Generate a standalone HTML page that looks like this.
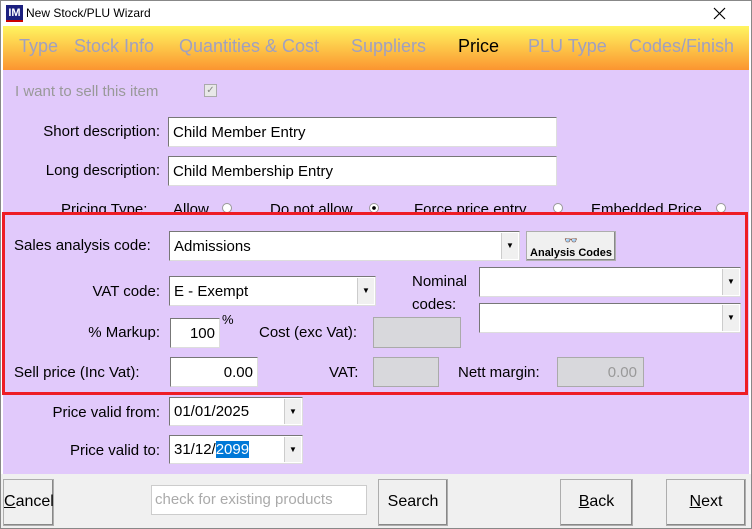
<!DOCTYPE html>
<html><head><meta charset="utf-8"><style>
*{box-sizing:border-box;margin:0;padding:0}
body{width:752px;height:529px;overflow:hidden;background:#fff;font-family:"Comic Sans MS","Liberation Sans",sans-serif;font-size:15px;color:#000;position:relative}
.a{position:absolute;white-space:nowrap}
.win{position:absolute;left:0;top:0;width:752px;height:529px;border:1px solid #888}
.title{left:1px;top:1px;width:750px;height:25px;background:#fff;font-size:12px}
.band{left:3px;top:26px;width:746px;height:44px;background:linear-gradient(#fff560,#fb9530)}
.band span{position:absolute;top:10px;font-size:18px;color:#a0a0c0}
.lav{left:3px;top:70px;width:746px;height:404px;background:#e1c9fb}
.bot{left:1px;top:474px;width:750px;height:54px;background:#f0f0f0}
.in{position:absolute;background:#fff;border:1px solid #777;border-right-color:#ddd;border-bottom-color:#ddd;padding:5px 4px 0;font-size:15px;line-height:20px}
.gr{position:absolute;background:#d8d8dc;border:1px solid #aaa;text-align:right;padding:5px 6px 0;color:#999;line-height:20px}
.dd{position:absolute;right:1px;top:1px;bottom:1px;width:17px;background:#f0f0f0;border-left:1px solid #ccc;font-size:8px;text-align:center;line-height:26px}
.btn{position:absolute;background:#f0f0f0;border:1px solid #adadad;box-shadow:inset -1px -1px #888;text-align:center;font-size:16px}
.r{position:absolute;width:10px;height:10px;border-radius:50%;background:#fff;border:1px solid #999}
.lb{position:absolute;text-align:right;white-space:nowrap}
</style></head><body>
<div class="win"></div>
<div class="a title"><div class="a" style="left:5px;top:4px;width:17px;height:17px;background:#1c2080;color:#fff;font-size:11px;font-weight:bold;text-align:center;line-height:17px;border-bottom:2px solid #c00">IM</div><span class="a" style="left:25px;top:5px">New Stock/PLU Wizard</span>
<svg class="a" style="left:712px;top:6px" width="13" height="13"><path d="M1 1L12 12M12 1L1 12" stroke="#000" stroke-width="1.2"/></svg></div>
<div class="a band"><span style="left:16px">Type</span><span style="left:71px">Stock Info</span><span style="left:176px">Quantities &amp; Cost</span><span style="left:348px">Suppliers</span><span style="left:455px;color:#000">Price</span><span style="left:525px">PLU Type</span><span style="left:626px">Codes/Finish</span></div>
<div class="a lav"></div>
<div class="a bot"></div>

<div class="a" style="left:15px;top:83px;color:#999">I want to sell this item</div>
<div class="a" style="left:204px;top:84px;width:13px;height:13px;border:1px solid #aaa;background:#e8e8e8;font-size:10px;color:#888;line-height:11px;text-align:center">✓</div>

<div class="lb" style="right:592px;top:123px">Short description:</div>
<div class="in" style="left:168px;top:117px;width:389px;height:30px">Child Member Entry</div>
<div class="lb" style="right:592px;top:162px">Long description:</div>
<div class="in" style="left:168px;top:156px;width:389px;height:30px">Child Membership Entry</div>

<div class="a" style="left:61px;top:201px">Pricing Type:</div>
<div class="a" style="left:173px;top:201px">Allow</div><div class="r" style="left:222px;top:203px"></div>
<div class="a" style="left:270px;top:201px">Do not allow</div><div class="r" style="left:369px;top:203px;background:radial-gradient(#000 30%,#fff 35%)"></div>
<div class="a" style="left:414px;top:201px">Force price entry</div><div class="r" style="left:553px;top:203px"></div>
<div class="a" style="left:591px;top:201px">Embedded Price</div><div class="r" style="left:716px;top:203px"></div>

<div class="a" style="left:2px;top:212px;width:746px;height:183px;border:3px solid #ee1c25;background:#e1c9fb"></div>

<div class="a" style="left:14px;top:237px">Sales analysis code:</div>
<div class="in" style="left:169px;top:231px;width:351px;height:30px">Admissions<div class="dd">▼</div></div>
<div class="btn" style="left:526px;top:231px;width:90px;height:30px;font-size:11px;font-weight:bold;line-height:12px;padding-top:3px">👓<br>Analysis Codes</div>

<div class="lb" style="right:592px;top:283px">VAT code:</div>
<div class="in" style="left:169px;top:276px;width:207px;height:30px">E - Exempt<div class="dd">▼</div></div>
<div class="a" style="left:412px;top:270px;line-height:23px">Nominal<br>codes:</div>
<div class="in" style="left:479px;top:267px;width:262px;height:30px"><div class="dd">▼</div></div>
<div class="in" style="left:479px;top:303px;width:262px;height:30px"><div class="dd">▼</div></div>

<div class="lb" style="right:592px;top:324px">% Markup:</div>
<div class="in" style="left:170px;top:318px;width:50px;height:30px;text-align:right">100</div>
<div class="a" style="left:222px;top:312px;font-size:13px">%</div>
<div class="a" style="left:259px;top:324px">Cost (exc Vat):</div>
<div class="gr" style="left:373px;top:317px;width:88px;height:31px"></div>

<div class="a" style="left:14px;top:364px">Sell price (Inc Vat):</div>
<div class="in" style="left:170px;top:357px;width:88px;height:30px;text-align:right">0.00</div>
<div class="a" style="left:329px;top:364px">VAT:</div>
<div class="gr" style="left:373px;top:357px;width:66px;height:30px"></div>
<div class="a" style="left:458px;top:364px">Nett margin:</div>
<div class="gr" style="left:557px;top:357px;width:87px;height:30px">0.00</div>

<div class="lb" style="right:592px;top:404px">Price valid from:</div>
<div class="in" style="left:169px;top:397px;width:134px;height:29px;padding-top:4px">01/01/2025<div class="dd">▼</div></div>
<div class="lb" style="right:592px;top:442px">Price valid to:</div>
<div class="in" style="left:169px;top:435px;width:134px;height:29px;padding-top:4px">31/12/<span style="background:#0078d7;color:#fff">2099</span><div class="dd">▼</div></div>

<div class="btn" style="left:3px;top:479px;width:51px;height:47px;line-height:44px"><u>C</u>ancel</div>
<div class="a" style="left:151px;top:485px;width:216px;height:30px;background:#fff;border:1px solid #ccc;color:#aaa;padding:5px 3px 0;font-size:15px">check for existing products</div>
<div class="btn" style="left:378px;top:479px;width:70px;height:47px;line-height:44px">Search</div>
<div class="btn" style="left:560px;top:479px;width:73px;height:47px;line-height:44px"><u>B</u>ack</div>
<div class="btn" style="left:666px;top:479px;width:80px;height:47px;line-height:44px"><u>N</u>ext</div>
</body></html>
